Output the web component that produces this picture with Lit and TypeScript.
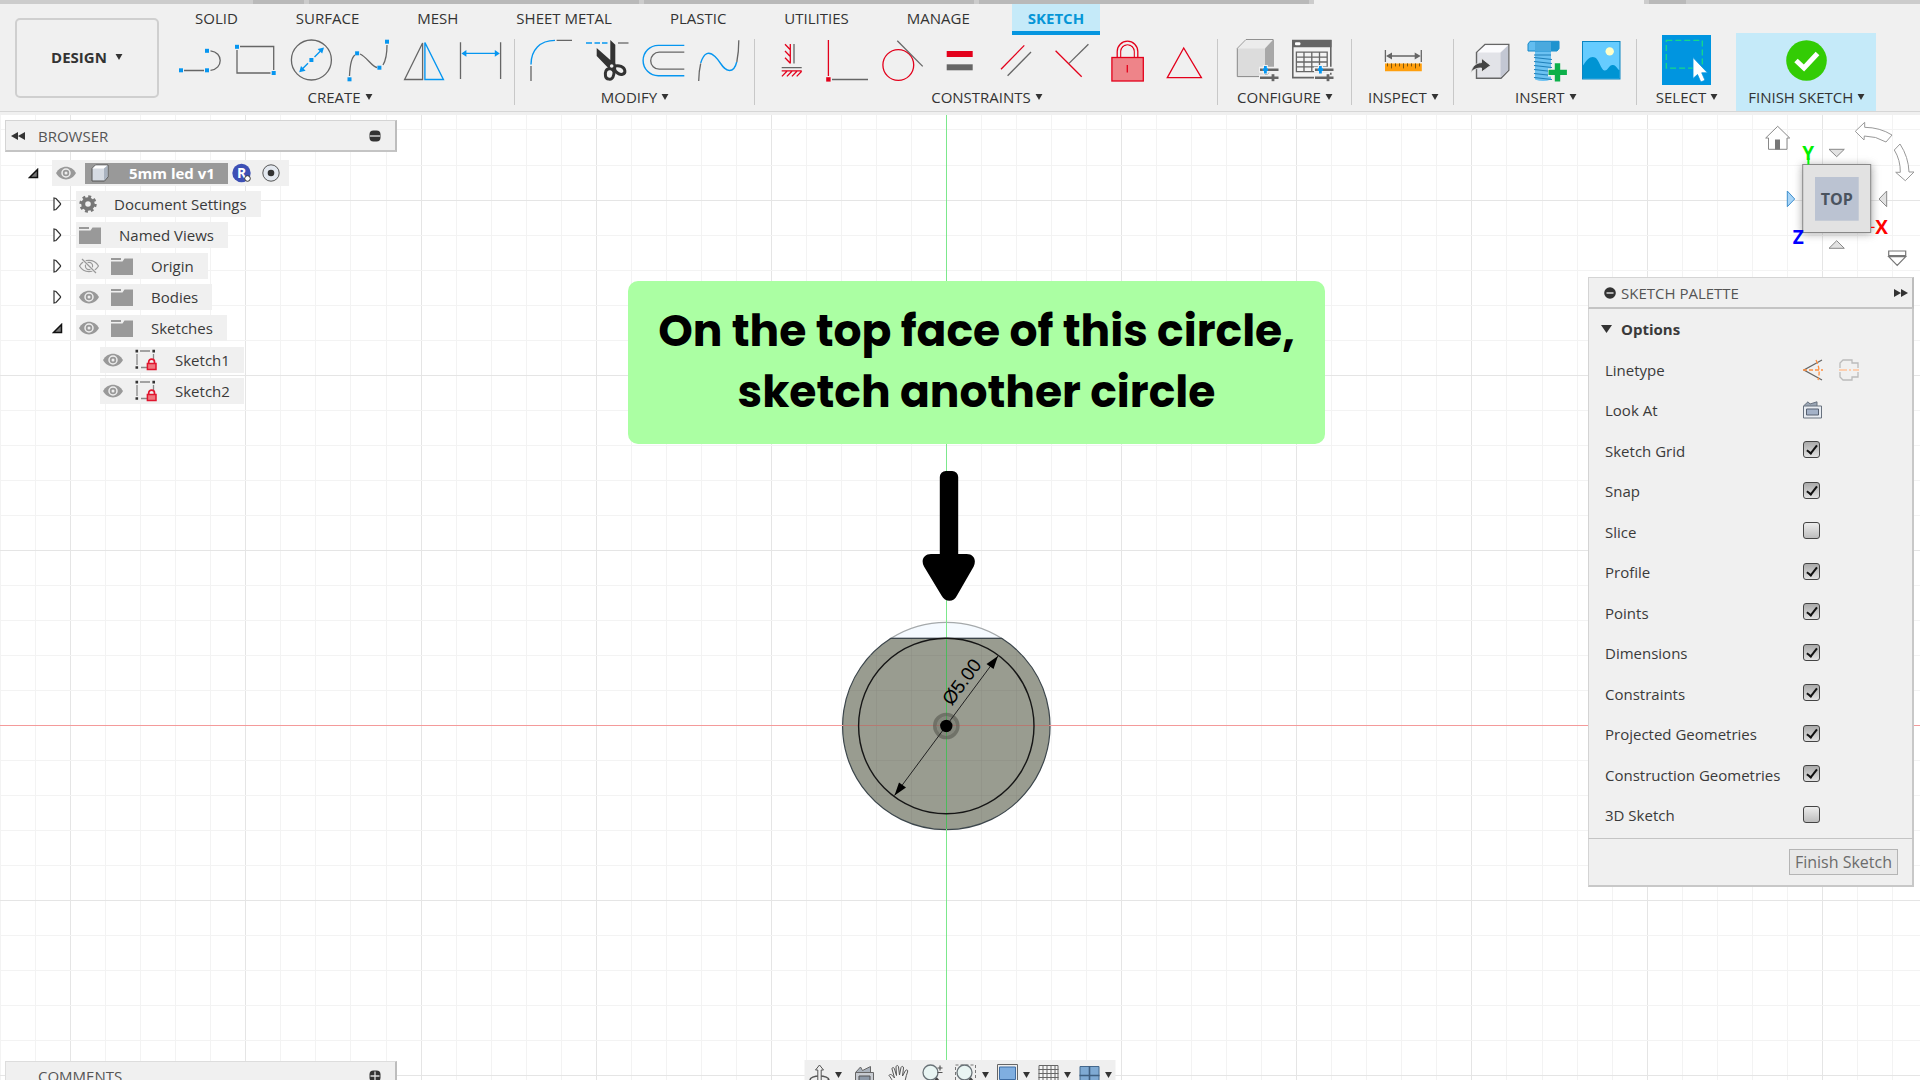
import { LitElement, html, svg, css, nothing, SVGTemplateResult, TemplateResult } from "lit";
import { customElement, state } from "lit/decorators.js";
import { classMap } from "lit/directives/class-map.js";

/* ---------- Icon drawings (ribbon icons use a 40 x 50 box) ---------- */

const dot = (x: number, y: number) =>
  svg`<rect class="b-fill" x=${x - 2} y=${y - 2} width="4" height="4"></rect>`;

const sliders = (x: number) => svg`
  <path d="M${x - 1} 34.7h21M${x - 1} 42.7h21" stroke="#f0f0f0" stroke-width="6"></path>
  <path d="M${x} 34.7h18.5M${x} 42.7h18.5" stroke="#666" stroke-width="2.6"></path>
  <path d="M${x + 13} 39.2v7" stroke="#666" stroke-width="2.8"></path>
  <path d="M${x + 5.4} 30v9" stroke="#f0f0f0" stroke-width="5"></path>
  <path d="M${x + 5.4} 31v7.4M${x + 3} 34.7h5" stroke="#0696f0" stroke-width="2.8"></path>`;

const ribbonIcons: Record<string, SVGTemplateResult> = {
  line: svg`<path class="g" d="M4 35.5H24M30.5 35.3C37 34.6 40.2 30 40.2 25.5S37 16.6 30.5 15.8"></path>
    ${dot(1, 35.3)}${dot(27, 35.3)}${dot(27, 15.8)}`,
  rect: svg`<path class="g" d="M4 11.5H37.7V35M34.5 38H1V15"></path>${dot(1, 11.8)}${dot(37.7, 38)}`,
  circle: svg`<circle class="g" cx="19.4" cy="25" r="20"></circle>
    <path class="b" d="M22.5 22l6-6M16 28.2l-6 6"></path>
    <path class="b-fill" d="M32 12.4l-1.8 6.2-4.6-4.6zM7.2 37.3l1.8-6.2 4.6 4.6z"></path>${dot(19.4, 25)}`,
  spline: svg`<path class="g" d="M1.5 41C2 30 4 22 7 20M12 19C19 22 24 32 29 32.5M35 30C38 25 39 18 39 10"></path>
    ${dot(1.5, 44.3)}${dot(9.1, 18.3)}${dot(31.4, 32.7)}${dot(39, 6.7)}`,
  mirror: svg`<path class="g" d="M.6 44.5L18.6 8V44.5z"></path><path class="b" d="M20.9 7.5V44.5H39.4z"></path>`,
  dimension: svg`<path class="g" d="M.5 7.3V44M40.6 7.3V44"></path><path class="b" d="M4 18.4H37"></path>
    <path class="b-fill" d="M1.4 18.4l5-3.4v6.8zM39.8 18.4l-5-3.4v6.8z"></path>`,
  fillet: svg`<path class="b" d="M0 29.5C0 15 9 5.4 24 5.4"></path><path class="g" d="M25.6 5.4H41M0 31v15"></path>`,
  trim: svg`<path class="b" d="M-1 8h6M7.5 8h5.500M15 8h5.500" stroke-width="2"></path>
    <path class="g" d="M31 8h10.500" stroke-width="2"></path>
    <path fill="#333" d="M23.300 5l5 4.800V28l1 4-6 3-3-3-10.600-11V13l13.600 12z"></path>
    <path stroke="#333" stroke-width="3" fill="none" d="M23.500 33.500c-5 0-5.500 4-5 7.500s6 4.500 7.500 1 2-7-2.500-8.500zM28 31c4-1 9 .5 9.800 4.500s-4.300 5-7.300 2.500-3.500-4-2.500-7z"></path>
    <circle cx="24.700" cy="31" r="1.800" fill="#eee"></circle>`,
  offset: svg`<path class="b" d="M41.300 10.400H15.300a15.200 15.200 0 0 0 0 30.400H41.300" stroke-width="1.800"></path>
    <path class="g" d="M41.300 17.200H16.200a8.500 8.500 0 0 0 0 17H41.300"></path>`,
  curve: svg`<path class="g" d="M-.3 46C-.2 39 .6 33 1.700 28.500M37.800 27C39.200 20 39.800 12 39.800 5.300"></path>
    <path class="b" d="M1.700 28C5 17 10 16 16 21.500S24 35.500 30.500 35.500C34 35.500 36.500 32 37.700 27"></path>`,
  fix: svg`<path class="r" d="M19.300 9v19.500M14 9.300l5.300 5.500M14 16l5.300 5.500M14 22.700l5.300 5.500M10.700 35.900h20M15.900 36.200l-5 5.200M20.900 36.200l-5 5.200M25.900 36.200l-5 5.200M30.700 36.200l-5 5.200"></path>
    <path class="g" d="M23 9v19.500M10.700 32.700h20"></path>`,
  perpendicular: svg`<path class="r" d="M1.400 5v36"></path><path class="g" d="M5 44.500h36"></path>
    <rect class="r-fill" x="-.8" y="42.200" width="4.400" height="4.400"></rect>`,
  tangent: svg`<circle class="r" cx="15.300" cy="30" r="15.400"></circle><path class="g" d="M14.300 5.700L39.700 31.400"></path>`,
  equal: svg`<path class="r-fill" d="M7.700 16h26v6h-26z"></path><path fill="#666" d="M7.700 29.300h26v6h-26z"></path>`,
  parallel: svg`<path class="r" d="M6 34.200L29.300 10.400"></path><path class="g" d="M12.600 40.800L36 17"></path>`,
  midpoint: svg`<path class="g" d="M18 28.400L37.400 9.200"></path><path class="r" d="M4.600 15.700L30.700 41.800"></path>`,
  lock: svg`<path class="r" d="M10.200 22.300V16.500a10.300 10.300 0 0 1 20.600 0v5.800M13.800 22.300V16.500a6.700 6.700 0 0 1 13.400 0v5.800" fill="#f3a0a6"></path>
    <path d="M14.500 22V16.500a6 6 0 0 1 12 0V22z" fill="#f0f0f0"></path>
    <rect class="lock-body" x="4.900" y="22.500" width="31.400" height="23.500"></rect>
    <path class="r" d="M20.300 30v7.500"></path>`,
  triangle: svg`<path class="r" d="M20.700 13L4.300 42.600H38.400z"></path>`,
  configure: svg`<path d="M.3 13.400L9 4.600H36.200V33L28 41.600H.3z" fill="#dcdcdc" stroke="#888"></path>
    <path d="M.8 13.400L9 5H35.800L28 13.400z" fill="#ececec"></path><path d="M28 13.400L36 5V33L28 41.200z" fill="#a8a8a8"></path>${sliders(23)}`,
  table: svg`<path d="M-.2 5.500H37.800V42.600H-.2z" fill="#f4f4f4" stroke="#666" stroke-width="1.600"></path>
    <path d="M-1 5H38.500v7.300H-1z" fill="#666"></path><rect x="2" y="7.200" width="5.400" height="3" rx="1" fill="#fff"></rect>
    <path class="g" d="M3.400 17.200H34.200V36.700H3.400zM3.400 22.100h31M3.400 27h31M3.400 31.900h31M11 17v20M18.800 17v20M26.500 17v20"></path>${sliders(22)}`,
  inspect: svg`<path class="g" d="M2.400 15v12M38.300 15v12M6 21h29"></path>
    <path fill="#666" d="M3 21l6-3.600v7.200zM37.700 21l-6-3.600v7.200z"></path>
    <path fill="#ff9f0d" d="M2 28.400h36.800v7.900H2z"></path>
    <path stroke="#7a5410" d="M4.500 28.400v3M8.500 28.400v5M12.500 28.400v3M16.500 28.400v3M20.500 28.400v5M24.500 28.400v3M28.500 28.400v3M32.500 28.400v5M36.500 28.400v3"></path>`,
  insert: svg`<path d="M6.500 17.600L15 9.400H38.800V35.200L31 43.300H6.500z" fill="#e2e3e8" stroke="#666" stroke-width="1.400"></path>
    <path d="M7.400 17.600L15.300 10.200H38L30.400 17.600z" fill="#fbfbfd"></path><path d="M30.600 17.800L38.200 10.600V35L30.600 42.600z" fill="#c3c7d3"></path>
    <path fill="#444" stroke="#f0f0f0" stroke-width=".8" d="M.8 37.500C2.500 31 6 28 11.500 27.600V23.300L20.600 30.400 11.500 37V33C7 33 4 34 .8 37.500z"></path>`,
  screw: svg`<path d="M9 15h16v29.500q-8 3-16 0z" fill="#6cc2f2"></path>
    <path d="M8 22.500l18 2M8 26.500l18 2M8 30.500l18 2M8 34.500l18 2M8 38.500l18 2M8 42.500l18 2M8 20h17" stroke="#1f7fb8" stroke-width="1.200"></path>
    <path d="M2 9l2-2.700H33V13.500L31 16H2z" fill="#62bdf0" stroke="#1488c8"></path><path d="M9 7h16v9H9z" fill="#4aa9de"></path><path d="M25 7h8v6.500L31 16h-6z" fill="#1f93cf"></path>
    <path d="M31.500 27.500v20M22 37.400h19" stroke="#f0f0f0" stroke-width="8"></path>
    <path d="M31.500 28.300v18.200M22.500 37.400h18.400" stroke="#0cb04a" stroke-width="5.400"></path>`,
  picture: svg`<rect x=".5" y="6.500" width="37.500" height="37.500" fill="#66ccff" stroke="#0a85c2"></rect>
    <circle cx="27.700" cy="16.400" r="4.200" fill="#ffffc8"></circle>
    <path fill="#0094d3" d="M1 30.500C5 24 9 20.500 13 22.500S19 35 22.500 35.500 27 29.500 31 30s4 4.500 6.500 5V43.500H1z"></path>`,
  select: svg`<rect x="0" y="0" width="49" height="50" fill="#0095e0"></rect>
    <path d="M4.300 5.400H40.300V33.200H4.300z" fill="none" stroke="#15d98a" stroke-width="1.300" stroke-dasharray="6 3"></path>
    <path fill="#fff" stroke="#0095e0" stroke-width=".8" d="M31 22.500V43.500L35.500 39.500 38.800 47 43 45.300 39.700 37.800H45.500z"></path>`,
  finish: svg`<circle cx="24.500" cy="25.500" r="20.300" fill="#33cc05"></circle>
    <path d="M14 25.500L22 33 35.500 18.500" fill="none" stroke="#fff" stroke-width="5"></path>`,
};

const eye = svg`<path d="M0 10C4.500 1.500 15.500 1.500 20 10C15.500 18.500 4.500 18.500 0 10z" fill="#999"></path>
  <circle cx="10" cy="10" r="4" fill="#999" stroke="#eee" stroke-width="1.500"></circle><circle cx="10" cy="10" r="1.500" fill="#eee"></circle>`;
const eyeOff = svg`<path d="M.5 10C5 2.500 15 2.500 19.500 10C15 17.500 5 17.500 .5 10z" fill="none" stroke="#999" stroke-width="1.200"></path>
  <circle cx="10" cy="10" r="3.600" fill="none" stroke="#999" stroke-width="1.200"></circle><path d="M3 3L17 17" stroke="#f0f0f0" stroke-width="3"></path><path d="M3 3L17 17" stroke="#999" stroke-width="1.300"></path>`;
const folder = svg`<path d="M0 2h10v2H0zM0 5.500h11.500L13.500 2.500H22V19H0z" fill="#999"></path>`;
const gear = svg`<circle cx="9" cy="10" r="4.800" fill="none" stroke="#777" stroke-width="4"></circle>
  <circle cx="9" cy="10" r="7.400" fill="none" stroke="#777" stroke-width="2.600" stroke-dasharray="2.900 2.911"></circle>`;
const sketchIcon = svg`<path d="M5 2h10M2 5v11M6 18.500h6M18.500 5v6" stroke="#888" stroke-width="1.300"></path>
  <path d="M.5 .8h2.600v2.600H.5zM17.400 .8H20v2.600h-2.600zM.5 17.200h2.600v2.600H.5z" fill="#333"></path>
  <path d="M13.700 14.500V13a2.900 2.900 0 0 1 5.800 0v1.500" fill="none" stroke="#e0142d" stroke-width="1.700"></path>
  <rect x="12.400" y="14.500" width="8.600" height="6" fill="#f0777f" stroke="#e0142d" stroke-width="1.500"></rect>`;

interface RibbonGroup { id: string; label: string; icons: [string, string][] }

const GROUPS: RibbonGroup[] = [
  { id: "create", label: "CREATE", icons: [["line", "Line"], ["rect", "Rectangle"], ["circle", "Circle"], ["spline", "Spline"], ["mirror", "Mirror"], ["dimension", "Dimension"]] },
  { id: "modify", label: "MODIFY", icons: [["fillet", "Fillet"], ["trim", "Trim"], ["offset", "Offset"], ["curve", "Curvature"]] },
  { id: "constraints", label: "CONSTRAINTS", icons: [["fix", "Horizontal/Vertical"], ["perpendicular", "Coincident"], ["tangent", "Tangent"], ["equal", "Equal"], ["parallel", "Parallel"], ["midpoint", "Perpendicular"], ["lock", "Fix"], ["triangle", "Midpoint"]] },
  { id: "configure", label: "CONFIGURE", icons: [["configure", "Configure model"], ["table", "Configuration table"]] },
  { id: "inspect", label: "INSPECT", icons: [["inspect", "Measure"]] },
  { id: "insert", label: "INSERT", icons: [["insert", "Insert derive"], ["screw", "Insert fastener"], ["picture", "Canvas"]] },
  { id: "select", label: "SELECT", icons: [["select", "Select"]] },
  { id: "finish", label: "FINISH SKETCH", icons: [["finish", "Finish sketch"]] },
];

const caret = html`<svg class="caret" viewBox="0 0 8 7" aria-hidden="true"><path d="M0 0h8L4 7z" fill="currentColor"></path></svg>`;

@customElement("ribbon-bar")
export class RibbonBar extends LitElement {
  static styles = css`
    :host { display: block; background: #f0f0f0; color: #333; font: 15px/20px "Open Sans", "Noto Sans", sans-serif; }
    button { font: inherit; color: inherit; background: none; border: 0; padding: 0; margin: 0; cursor: pointer; }
    .docs { display: flex; gap: 5px; height: 4px; background: #ccc; overflow: hidden; }
    .doc { background: #b9b9b9; width: 330px; }
    .doc.lead { width: 51px; margin-left: 253px; }
    .doc.active { background: #f0f0f0; }
    .doc.add { width: 37px; }
    .bar { display: flex; padding-left: 15px; height: 107px; border-bottom: 1px solid #d6d6d6; margin-bottom: 3px; }
    .workspace { width: 144px; height: 80px; margin-top: 14px; padding-bottom: 3px; border: 2px solid #cfcfcf; border-radius: 5px; font-weight: 700; display: flex; align-items: center; justify-content: center; gap: 8px; flex: none; box-sizing: border-box; }
    .caret { width: 8px; height: 6px; }
    .main { display: flex; flex-direction: column; margin-left: 5px; }
    .tabs { display: flex; height: 29px; padding-left: 15px; }
    .tab { padding: 0 16px; margin: 0 13px; height: 31px; box-sizing: border-box; white-space: nowrap; border-bottom: 4px solid transparent; }
    .tab:first-child { margin-left: 0; }
    .tab.on { background: #c5eaf9; color: #0696d7; font-weight: 700; border-bottom-color: #0696e0; }
    .groups { display: flex; height: 78px; }
    .group { display: flex; flex-direction: column; align-items: center; position: relative; padding: 2px 15px 0 16px; }
    .group.modify { padding-right: 16px; }
    .group.configure { padding-left: 19px; padding-right: 19px; }
    .group.select { padding-left: 19px; padding-right: 18px; }
    .group.finish { background: #c5eaf9; padding-right: 11px; padding-left: 12px; }
    .divided::after { content: ""; position: absolute; right: 0; top: 6px; width: 1px; height: 66px; background: #c8c8c8; }
    .icons { display: flex; gap: 16px; }
    .icon { display: block; width: 40px; height: 50px; }
    .select .icon, .finish .icon { width: 50px; }
    .icon svg { display: block; width: 100%; height: 50px; overflow: visible; }
    .label { display: flex; align-items: center; gap: 4px; height: 24px; white-space: nowrap; }
    .g { fill: none; stroke: #666; stroke-width: 1.3; }
    .b { fill: none; stroke: #0696f0; stroke-width: 1.4; }
    .r { fill: none; stroke: #e3001b; stroke-width: 1.3; }
    .lock-body { fill: #ee8489; stroke: #e3001b; stroke-width: 1.3; }
    .b-fill { fill: #0696f0; }
    .r-fill { fill: #e3001b; }
  `;
  @state() private tab = "SKETCH";
  private tabs = ["SOLID", "SURFACE", "MESH", "SHEET METAL", "PLASTIC", "UTILITIES", "MANAGE", "SKETCH"];

  render() {
    return html`
      <div class="docs"><span class="doc lead"></span><span class="doc"></span><span class="doc"></span><span class="doc"></span><span class="doc active"></span><span class="doc add"></span></div>
      <div class="bar">
        <button class="workspace">DESIGN ${caret}</button>
        <div class="main">
          <nav class="tabs">
            ${this.tabs.map((t) => html`<button class=${classMap({ tab: true, on: t === this.tab })} @click=${() => (this.tab = t)}>${t}</button>`)}
          </nav>
          <div class="groups">
            ${GROUPS.map((g) => html`
              <section class=${classMap({ group: true, [g.id]: true, divided: g.id !== "select" && g.id !== "finish" })}>
                <div class="icons">
                  ${g.icons.map(([name, title]) => html`<button class="icon" aria-label=${title}>
                    <svg viewBox=${g.id === "select" || g.id === "finish" ? "0 0 50 50" : "0 0 40 50"}>${ribbonIcons[name]}</svg></button>`)}
                </div>
                <button class="label">${g.label} ${caret}</button>
              </section>`)}
          </div>
        </div>
      </div>`;
  }
}

interface TreeNode { label: string; icon: "gear" | "folder" | "sketch"; eye?: "on" | "off"; arrow?: "open" | "closed" }

const NODES: TreeNode[] = [
  { label: "Document Settings", icon: "gear", arrow: "closed" },
  { label: "Named Views", icon: "folder", arrow: "closed" },
  { label: "Origin", icon: "folder", eye: "off", arrow: "closed" },
  { label: "Bodies", icon: "folder", eye: "on", arrow: "closed" },
  { label: "Sketches", icon: "folder", eye: "on", arrow: "open" },
];
const SKETCHES: TreeNode[] = [
  { label: "Sketch1", icon: "sketch", eye: "on" },
  { label: "Sketch2", icon: "sketch", eye: "on" },
];

const panelStyles = css`
  :host { display: block; color: #3a3a3a; font: 15px/20px "Open Sans", "Noto Sans", sans-serif; }
  button { font: inherit; color: inherit; background: none; border: 0; padding: 0; margin: 0; cursor: pointer; }
  .head { display: flex; align-items: center; box-sizing: border-box; height: 32px; background: #f0f0f0; border: 1px solid #d4d4d4; border-right: 2px solid #bdbdbd; border-bottom: 2px solid #c4c4c4; color: #555; }
  .head svg { display: block; }
`;

const arrowIcon = (kind: "open" | "closed") =>
  kind === "open"
    ? html`<svg class="twist" width="11" height="11" viewBox="0 0 11 11"><path d="M1.500 9.500L9.500 1.500V9.500z" fill="#777" stroke="#111" stroke-width="1.500"></path></svg>`
    : html`<svg class="twist" width="11" height="14" viewBox="0 0 11 14"><path d="M2 1V13L4 12.500 8.500 7.500V6.500L4 1.500z" fill="#fff" stroke="#333" stroke-width="1.200"></path></svg>`;

@customElement("browser-tree")
export class BrowserTree extends LitElement {
  static styles = [panelStyles, css`
    .head { padding: 0 14px 0 5px; }
    .title { margin-left: 13px; flex: 1; }
    ul { list-style: none; margin: 0; padding: 0; display: flex; flex-direction: column; gap: 5px; }
    .tree { padding: 8px 0 0 23px; }
    .kids { padding: 0 0 0 24px; margin-top: 5px; }
    .leaves { padding-left: 72px; margin-top: 6px; }
    .row { display: flex; align-items: center; height: 26px; }
    .twist-box { width: 24px; height: 26px; display: flex; align-items: center; }
    .chip { display: flex; align-items: center; height: 26px; background: #f0f0f0; padding: 0 14px 0 3px; white-space: nowrap; }
    .chip svg { display: block; flex: none; }
    .chip .eye { margin-right: 12px; }
    .text { margin-left: 18px; }
    .gear .text { margin-left: 15px; }
    .root { padding: 0 9px 0 4px; }
    .root .eye { margin-right: 9px; }
    .name { display: flex; align-items: center; height: 21px; width: 143px; box-sizing: border-box; padding-left: 6px; gap: 20px; background: #999; color: #fff; font-weight: 700; }
    .badge { margin: 0 10px 0 4px; }
  `];

  private row(n: TreeNode): TemplateResult {
    const art = { gear: html`<svg width="20" height="20" viewBox="0 0 20 20">${gear}</svg>`, folder: html`<svg width="22" height="20" viewBox="0 0 22 20">${folder}</svg>`, sketch: html`<svg width="22" height="22" viewBox="0 0 22 22">${sketchIcon}</svg>` }[n.icon];
    return html`<li class="row">
      ${n.arrow ? html`<button class="twist-box" aria-label="Toggle ${n.label}">${arrowIcon(n.arrow)}</button>` : nothing}
      <span class="chip ${n.icon}">
        ${n.eye ? html`<svg class="eye" width="20" height="20" viewBox="0 0 20 20">${n.eye === "on" ? eye : eyeOff}</svg>` : nothing}
        ${art}<span class="text">${n.label}</span>
      </span></li>`;
  }

  render() {
    return html`
      <header class="head">
        <button aria-label="Collapse browser"><svg width="14" height="10" viewBox="0 0 14 10"><path d="M7 1v8L0 5zM14 1v8L7 5z" fill="#333"></path></svg></button>
        <span class="title">BROWSER</span>
        <button aria-label="Minimize"><svg width="12" height="12" viewBox="0 0 12 12"><rect x=".5" y=".5" width="11" height="11" rx="4" fill="#333"></rect><path d="M1 6h10" stroke="#ccc" stroke-width="1.500"></path></svg></button>
      </header>
      <ul class="tree">
        <li>
          <div class="row">
            <button class="twist-box" aria-label="Toggle root">${arrowIcon("open")}</button>
            <span class="chip root">
              <svg class="eye" width="20" height="20" viewBox="0 0 20 20">${eye}</svg>
              <span class="name">
                <svg width="18" height="18" viewBox="0 0 18 18"><path d="M1 4.500L4.500 1H17V13L13.500 17H1z" fill="#d6dbe3" stroke="#555"></path><path d="M1.500 4.500L4.500 1.500H16.500L13 4.500z" fill="#fff"></path><path d="M13 4.500L16.500 1.500V13L13 16.500z" fill="#aab3c0"></path></svg>
                5mm led v1</span>
              <svg class="badge" width="20" height="20" viewBox="0 0 20 20"><circle cx="9.500" cy="10" r="9.200" fill="#3d50b5"></circle><text x="9.500" y="15" text-anchor="middle" font-size="14" font-weight="700" fill="#fff">R</text><circle cx="15.500" cy="15.500" r="2.800" fill="#fff" stroke="#333"></circle></svg>
              <svg width="18" height="18" viewBox="0 0 18 18"><circle cx="9" cy="9" r="8.200" fill="#e4e9f0" stroke="#555"></circle><circle cx="9" cy="9" r="3.300" fill="#333"></circle></svg>
            </span>
          </div>
          <ul class="kids">${NODES.map((n) => this.row(n))}</ul>
          <ul class="leaves">${SKETCHES.map((n) => this.row(n))}</ul>
        </li>
      </ul>`;
  }
}

@customElement("sketch-palette")
export class SketchPalette extends LitElement {
  static styles = [panelStyles, css`
    :host { background: #f0f0f0; }
    .head { padding: 0 4px 0 15px; }
    .title { flex: 1; margin-left: 5px; }
    .body { border: 1px solid #d4d4d4; border-top: 0; border-right: 2px solid #c8c8c8; border-bottom: 1px solid #c4c4c4; padding: 0 0 3px 16px; }
    .row { display: grid; grid-template-columns: 198px 1fr; align-items: center; height: 40px; }
    .row:nth-child(even) { height: 41px; }
    .row.heading { display: flex; gap: 9px; font-weight: 700; margin-left: -4px; }
    .types { display: flex; gap: 16px; }
    .types svg, .look svg { display: block; }
    input { appearance: none; width: 17px; height: 17px; margin: 0; position: relative; top: -1px; border: 1px solid #444; border-radius: 3px; background: linear-gradient(#ededed, #bdbdbd); }
    input:checked { background: linear-gradient(#aaa, #e2e2e2); }
    input:checked::after { content: ""; position: absolute; left: 5px; top: 1px; width: 4px; height: 9px; border: solid #111; border-width: 0 2px 2px 0; transform: rotate(38deg); }
    .foot { display: flex; justify-content: flex-end; align-items: center; height: 46px; padding-right: 14px; border: 1px solid #d4d4d4; border-top: 0; border-right: 2px solid #c8c8c8; border-bottom: 2px solid #c8c8c8; }
    .foot button { border: 1px solid #b5b5b5; background: #e8e8e8; color: #6c6c6c; height: 26px; padding: 0 5px; font-size: 16px; }
  `];
  private options: [string, boolean][] = [["Sketch Grid", true], ["Snap", true], ["Slice", false], ["Profile", true], ["Points", true], ["Dimensions", true], ["Constraints", true], ["Projected Geometries", true], ["Construction Geometries", true], ["3D Sketch", false]];

  render() {
    return html`
      <header class="head">
        <svg width="12" height="12" viewBox="0 0 12 12"><circle cx="6" cy="6" r="5.800" fill="#333"></circle><path d="M2.500 6h7" stroke="#ddd" stroke-width="1.500"></path></svg>
        <span class="title">SKETCH PALETTE</span>
        <button aria-label="Collapse palette"><svg width="14" height="10" viewBox="0 0 14 10"><path d="M0 1v8L7 5zM7 1v8l7-4z" fill="#333"></path></svg></button>
      </header>
      <div class="body">
        <div class="row heading"><svg width="11" height="8" viewBox="0 0 11 8"><path d="M0 0h11L5.500 8z" fill="#333"></path></svg>Options</div>
        <div class="row"><span>Linetype</span><span class="types">
          <button aria-label="Construction"><svg width="20" height="22" viewBox="0 0 20 22"><path d="M19 1L1 11 19 21" fill="none" stroke="#666" stroke-width="1.200"></path><path d="M0 11h20M13 1q5 10 2 20" fill="none" stroke="#ff9040" stroke-width="1.300" stroke-dasharray="4 2"></path></svg></button>
          <button aria-label="Centerline"><svg width="20" height="22" viewBox="0 0 20 22"><path d="M1 9V4L4 1H13V4H19V9M1 13V18L4 21H13V18H19V13" fill="none" stroke="#bbb" stroke-width="1.300"></path><path d="M0 11h20" stroke="#ffc299" stroke-width="1.300" stroke-dasharray="8 2 2 2"></path></svg></button>
        </span></div>
        <div class="row"><span>Look At</span><button class="look" aria-label="Look At"><svg width="19" height="18" viewBox="0 0 19 18"><path d="M.5 5L5 .8 7 3 14 .8V5" fill="#9aa5b4" stroke="#68727f"></path><path d="M.5 5h18v12H.500z" fill="#e8ecf2" stroke="#68727f"></path><path d="M3.500 8h12v6h-12z" fill="#a4b2c8" stroke="#566070"></path></svg></button></div>
        ${this.options.map(([label, on], i) => html`<div class="row"><label for="opt-${i}">${label}</label><input id="opt-${i}" type="checkbox" ?checked=${on} /></div>`)}
      </div>
      <footer class="foot"><button>Finish Sketch</button></footer>`;
  }
}

@customElement("nav-bar")
export class NavBar extends LitElement {
  static styles = css`
    :host { display: flex; gap: 6px; height: 32px; padding: 0 3px; background: #efefef; box-sizing: border-box; }
    .set { display: flex; gap: 10px; }
    .set.views { gap: 6px; }
    button { display: flex; align-items: center; gap: 3px; background: none; border: 0; padding: 0; color: #333; height: 30px; }
    .art { width: 24px; height: 24px; overflow: visible; }
    .caret { width: 8px; height: 6px; }
  `;
  render() {
    const item = (label: string, art: SVGTemplateResult, menu = false) => html`<button aria-label=${label}><svg class="art" viewBox="0 0 24 24">${art}</svg>${menu ? caret : nothing}</button>`;
    const lens = svg`<path d="M15 15l6 7" stroke="#444" stroke-width="3"></path><circle cx="10" cy="9.500" r="7.500" fill="#e9f5f3" stroke="#6a7378" stroke-width="1.300"></circle>`;
    return html`
      <div class="set">
        ${item("Orbit", svg`<ellipse cx="12" cy="17" rx="9.500" ry="4" fill="none" stroke="#555" stroke-width="1.500"></ellipse><path d="M12 2l4 5h-2.300v15h-3.400V7H8z" fill="#eee" stroke="#555"></path><path d="M16 19l5-3 1 5z" fill="#444"></path>`, true)}
        ${item("Look at", svg`<path d="M3 9.500L8 4l2 3.500L18 3.500V9.500" fill="#aab2bc" stroke="#666"></path><path d="M3 9.500h18V23H3z" fill="#c8ccd2" stroke="#666"></path><path d="M6.500 13h11v8h-11z" fill="#8d99a8" stroke="#555"></path>`)}
        ${item("Pan", svg`<path d="M9 23C6 18 4 14 2.500 12.500c1-2 3-1 5.500 2.500L5.500 6c0-2 2-2 2.500 0l2 6.500L9.500 4c.3-2 2.300-2 2.500 0l1 8 1.500-7.500c.8-1.800 2.500-1.200 2.500.5L16 13l3-5.500c1.300-1.300 2.800-.3 2 1.500-2 5-2 9-4 14z" fill="#f2f2f2" stroke="#555"></path>`)}
        ${item("Zoom", svg`${lens}<path d="M17 5h5M19.500 2.500v5M17 9.500h5" stroke="#555" stroke-width="1.200"></path>`)}
        ${item("Fit", svg`<path d="M1 2h20v20H1z" fill="none" stroke="#777" stroke-dasharray="3 2"></path>${lens}`, true)}
      </div>
      <div class="set views">
        ${item("Display settings", svg`<path d="M2 1.500h20v21H2z" fill="#eee" stroke="#666"></path><path d="M4 4h16v12.500H4z" fill="#7faee0" stroke="#3f6ea5"></path>`, true)}
        ${item("Grid and snaps", svg`<path d="M2.500 2.500h19v20h-19zM6.500 2v21M10.500 2v21M14.500 2v21M18.500 2v21M2 6.500h20M2 10.500h20M2 14.500h20M2 18.500h20" fill="#f5f5f5" stroke="#666"></path>`, true)}
        ${item("Viewports", svg`<path d="M2.500 3.500h19v19h-19z" fill="#7faad3" stroke="#44688c"></path><path d="M12 3v20M2 12.500h20" stroke="#3f5f80" stroke-width="1.600"></path>`, true)}
      </div>`;
  }
}

const STEP = 35.03;

@customElement("app-root")
export class AppRoot extends LitElement {
  static styles = css`
    :host { display: flex; flex-direction: column; height: 100vh; overflow: hidden; background: #fff; font: 15px/20px "Open Sans", "Noto Sans", sans-serif; }
    .canvas { position: relative; flex: 1; min-height: 0; overflow: hidden; }
    .scene { position: absolute; inset: 0; width: 100%; height: 100%; }
    .minor { stroke: #f3f3f3; stroke-width: 1; }
    .major { stroke: #e5e5e5; stroke-width: 1; }
    .left { position: absolute; left: 5px; top: 5px; width: 392px; }
    .comments { position: absolute; left: 5px; bottom: -13px; width: 392px; height: 32px; box-sizing: border-box; display: flex; align-items: center; justify-content: space-between; padding: 0 14px 2px 32px; background: #f0f0f0; border: 1px solid #ddd; border-right: 2px solid #bdbdbd; color: #555; }
    .palette { position: absolute; right: 6px; top: 162px; width: 326px; }
    .cube { position: absolute; right: 0; top: 1px; width: 160px; height: 152px; }
    .nav { position: absolute; left: 50%; bottom: -12px; transform: translateX(-50%); }
    .callout { position: absolute; left: 50%; top: 166px; width: 697px; height: 163px; margin: 0 0 0 -332px; box-sizing: border-box; padding-top: 19px; border-radius: 10px; background: #abffa3; color: #000; text-align: center; font: 700 44px/61px Poppins, Inter, sans-serif; }
  `;

  private grid() {
    const v = [], h = [];
    for (let i = -40; i <= 40; i++) {
      const p = Math.round(i * STEP);
      v.push(svg`<path class=${i % 5 ? "minor" : "major"} d="M${p + 0.5} -611V354"></path>`);
      if (Math.abs(i) < 20) h.push(svg`<path class=${i % 5 ? "minor" : "major"} d="M-1400 ${p - 0.5}H1400"></path>`);
    }
    return [v, h];
  }

  render() {
    return html`
      <ribbon-bar></ribbon-bar>
      <main class="canvas">
        <svg class="scene" viewBox="-946 -611 1920 965" preserveAspectRatio="xMidYMid slice">
          ${this.grid()}
          <path d="M-55 -87.700A103.700 103.700 0 0 1 55.600 -87.700z" fill="#f5faff" stroke="#a5a9ab" stroke-width="1.200"></path>
          <path d="M-55 -87.700A103.700 103.700 0 1 0 55.600 -87.700z" fill="#999c90" stroke="#3c464c" stroke-width="1.200"></path>
          <path d="M-69.500 -76V76M-34.500 -87V97M35.500 -87V97M70.500 -76V76M-76 -70.500H76M-97 -35.500H97M-97 34.500H97M-76 69.500H76" stroke="#8a8d82" stroke-opacity=".4"></path>
          <path d="M-1400 -.5H1400" stroke="#f49a9a"></path>
          <path d="M-103 -.5H103.500" stroke="#b57a72"></path>
          <path d="M.5 -611V354" stroke="#7ce88c"></path>
          <path d="M.5 -87V103" stroke="#4dba5c"></path>
          <circle r="87.700" cx=".3" fill="none" stroke="#151515" stroke-width="1.400"></circle>
          <circle cx=".3" r="11.500" fill="none" stroke="#55564f" stroke-opacity=".6" stroke-width="3.600"></circle>
          <circle cx=".3" r="8" fill="none" stroke="#55564f" stroke-opacity=".3" stroke-width="3"></circle>
          <path d="M-51.500 69.500L52 -70" stroke="#222" stroke-width="1"></path>
          <path d="M52 -70L47.500 -57 40.500 -62zM-51.500 69.500L-47 56.500 -40 61.500z" fill="#000"></path>
          <circle cx=".3" r="6.200" fill="#000"></circle>
          <text transform="translate(5.500 -19.500) rotate(-53.400)" font-family="Liberation Sans, sans-serif" font-size="19" fill="#000">Ø5.00</text>
          <path d="M-6.200 -249a6 6 0 0 1 6 -6h6.400a6 6 0 0 1 6 6V-172h8.500c7 0 10 6 7 12.500L11 -130.500c-3 7-12 7-15.500 0L-22 -159.500c-3.500-6.500 0-12.500 7-12.500h8.800z" fill="#000"></path>
        </svg>

        <p class="callout">On the top face of this circle,<br />sketch another circle</p>

        <browser-tree class="left"></browser-tree>

        <svg class="cube" viewBox="0 0 160 152" font-family="Open Sans, Noto Sans, sans-serif" font-weight="700">
          <defs><filter id="glow" x="-30%" y="-30%" width="160%" height="160%"><feGaussianBlur stdDeviation="4"></feGaussianBlur></filter></defs>
          <path d="M8.500 22V33.300H27V22H29.700L17.700 10.300 5.700 22z" fill="#fff" stroke="#888"></path><path d="M15 23.500h5v10h-5z" fill="#777"></path>
          <g fill="#fff" stroke="#999"><path d="M95.300 15.300L104.700 6.300V11.300Q120 11.500 132 19L126 26Q116 20 104.300 20L104 24z"></path>
          <path d="M134.300 34L140 28Q148.500 41 149 56H154L145.300 64.700 135.700 56.300H140.300Q140.500 44 134.300 34z"></path></g>
          <rect x="42" y="49" width="70" height="69" fill="#777" opacity=".6" filter="url(#glow)"></rect>
          <rect x="42.700" y="48.500" width="68" height="68" fill="#e2e2e2" stroke="#888"></rect>
          <rect x="55" y="61" width="43.700" height="43.700" fill="#bbc3d2"></rect>
          <text x="76.800" y="88.500" text-anchor="middle" font-size="16" fill="#4a535f">TOP</text>
          <g fill="#e2e2e2" stroke="#888"><path d="M69 33.300H84.300L76.700 40.700zM126.700 75V90.700L119 83zM69 132.300H84.300L76.700 124.700z"></path></g>
          <path d="M27.300 75V90.700L34.700 83z" fill="#a9d5f7" stroke="#3f8fce"></path>
          <path d="M48.400 42V48.500" stroke="#0f0" stroke-width="2"></path><path d="M111 111.400h3.500" stroke="#f00" stroke-width="1.200"></path>
          <text x="48.300" y="44" text-anchor="middle" font-size="19" fill="#00f000">Y</text>
          <text x="121.700" y="118" text-anchor="middle" font-size="19" fill="#f00">X</text>
          <text x="38.300" y="128" text-anchor="middle" font-size="19" fill="#00f">Z</text>
          <path d="M128.700 135h17v4.700h-17zM128.700 140.700h17L137.200 149.300z" fill="#fff" stroke="#777" stroke-width="1.200"></path>
        </svg>

        <sketch-palette class="palette"></sketch-palette>

        <div class="comments"><span>COMMENTS</span><svg width="12" height="12" viewBox="0 0 12 12"><rect x=".5" y=".5" width="11" height="11" rx="4" fill="#333"></rect><path d="M1.500 6h9M6 1.500v9" stroke="#ddd" stroke-width="1.300"></path></svg></div>
        <nav-bar class="nav"></nav-bar>
      </main>`;
  }
}
